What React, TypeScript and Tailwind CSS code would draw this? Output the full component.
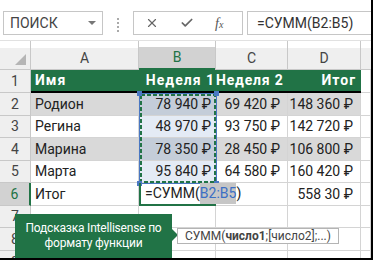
import React from 'react';
import { X, Check } from 'lucide-react';

interface DataRow {
  num: string;
  name: string;
  b: string;
  c: string;
  d: string;
  stripe: boolean;
  h: string;
}

const rows: DataRow[] = [
  { num: '2', name: 'Родион', b: '78 940 ₽', c: '69 420 ₽', d: '148 360 ₽', stripe: true, h: 'h-[23px]' },
  { num: '3', name: 'Регина', b: '48 970 ₽', c: '93 750 ₽', d: '142 720 ₽', stripe: false, h: 'h-[22px]' },
  { num: '4', name: 'Марина', b: '78 350 ₽', c: '28 450 ₽', d: '106 800 ₽', stripe: true, h: 'h-[23px]' },
  { num: '5', name: 'Марта', b: '95 840 ₽', c: '64 580 ₽', d: '160 420 ₽', stripe: false, h: 'h-[22px]' },
];

const grid = 'border-r border-b border-[#d4d4d4]';
const rowHead = 'w-[31px] shrink-0 flex items-center justify-center bg-[#efefef] border-r border-b border-[#c8c8c8] text-[14px] text-[#444]';
const colHead = 'flex flex-col border-r border-[#c8c8c8]';

const EmptyRow: React.FC<{ num: string; h: string }> = ({ num, h }) => (
  <div className={`flex ${h}`}>
    <div className={rowHead}>{num}</div>
    <div className={`w-[108px] ${grid}`} />
    <div className={`w-[77px] ${grid}`} />
    <div className={`w-[72px] ${grid}`} />
    <div className={`w-[73px] ${grid}`} />
    <div className={`flex-1 ${grid}`} />
  </div>
);

export default function App() {
  return (
    <div className="relative w-[373px] h-[260px] overflow-hidden bg-white border-r-2 border-b-2 border-black font-['Roboto',sans-serif]">
      {/* Formula bar */}
      <div className="flex h-[41px] pt-[11px] border-b border-[#e1e1e1]">
        <div className="ml-[3px] w-[100px] h-[24px] border border-[#c6c6c6] flex items-center justify-between pl-[6px] pr-[6px] text-[14px] text-[#444]">
          <span>ПОИСК</span>
          <span className="w-0 h-0 border-x-[4px] border-x-transparent border-t-[4px] border-t-[#777]" />
        </div>
        <div className="ml-[14px] mt-[7px] flex flex-col gap-[2px]">
          <span className="w-[2px] h-[2px] bg-[#aaa]" />
          <span className="w-[2px] h-[2px] bg-[#aaa]" />
          <span className="w-[2px] h-[2px] bg-[#aaa]" />
          <span className="w-[2px] h-[2px] bg-[#aaa]" />
        </div>
        <div className="ml-[14px] w-[110px] h-[24px] border border-[#c6c6c6] flex items-center">
          <X className="ml-[11px] w-[14px] h-[14px] text-[#666]" strokeWidth={2} />
          <Check className="ml-[21px] w-[14px] h-[14px] text-[#666]" strokeWidth={3} />
          <span className="ml-[21px] font-['Liberation_Serif',serif] italic text-[14px] text-[#555]">
            f<span className="text-[10px]">x</span>
          </span>
        </div>
        <div className="ml-[4px] flex-1 h-[24px] border-y border-l border-[#c6c6c6] flex items-center pl-[9px] text-[14px] text-[#333]">
          =СУММ(B2:B5)
        </div>
      </div>

      {/* Column headers */}
      <div className="flex h-[29px] text-[14px] text-[#444]">
        <div className={`w-[31px] shrink-0 ${colHead}`}>
          <div className="h-[7px]" />
          <div className="flex-1 flex items-end justify-end pr-[4px] pb-[4px] bg-[#efefef] border-b border-[#c8c8c8]">
            <span className="w-0 h-0 border-l-[11px] border-l-transparent border-b-[11px] border-b-[#b5b5b5]" />
          </div>
        </div>
        <div className={`w-[108px] ${colHead}`}>
          <div className="h-[7px]" />
          <div className="flex-1 flex items-center justify-center bg-[#efefef] border-b border-[#c8c8c8]">A</div>
        </div>
        <div className={`w-[77px] ${colHead}`}>
          <div className="h-[7px]" />
          <div className="flex-1 flex items-center justify-center bg-[#d2d2d2] border-b-2 border-[#217346] text-[#217346]">B</div>
        </div>
        <div className={`w-[72px] ${colHead}`}>
          <div className="h-[7px]" />
          <div className="flex-1 flex items-center justify-center bg-[#efefef] border-b border-[#c8c8c8]">C</div>
        </div>
        <div className={`w-[73px] ${colHead}`}>
          <div className="h-[7px]" />
          <div className="flex-1 flex items-center justify-center bg-[#efefef] border-b border-[#c8c8c8]">D</div>
        </div>
        <div className="flex-1 flex flex-col">
          <div className="h-[7px]" />
          <div className="flex-1 bg-[#efefef] border-b border-[#c8c8c8]" />
        </div>
      </div>

      {/* Row 1: header */}
      <div className="flex h-[23px]">
        <div className={rowHead}>1</div>
        <div className="w-[330px] flex bg-[#217346] border-b-2 border-black text-white text-[14px] font-bold tracking-[1px]">
          <div className="w-[108px] flex items-center pl-[4px]">Имя</div>
          <div className="w-[77px] flex items-center justify-end pr-[1px]">Неделя 1</div>
          <div className="w-[72px] flex items-center whitespace-nowrap tracking-[0.8px]">Неделя 2</div>
          <div className="w-[73px] flex items-center justify-end pr-[5px]">Итог</div>
        </div>
        <div className={`flex-1 ${grid}`} />
      </div>

      {/* Rows 2-5 */}
      {rows.map((r) => (
        <div key={r.num} className={`flex ${r.h} text-[14px] text-[#222]`}>
          <div className={rowHead}>{r.num}</div>
          <div className={`w-[108px] flex items-center pl-[4px] ${grid} ${r.stripe ? 'bg-[#d9d9d9]' : 'bg-white'}`}>{r.name}</div>
          <div className={`w-[77px] flex items-center justify-end pr-[4px] ${grid} ${r.stripe ? 'bg-[#c4cdd9]' : 'bg-[#e4ebf5]'}`}>{r.b}</div>
          <div className={`w-[72px] flex items-center justify-end pr-[7px] ${grid} ${r.stripe ? 'bg-[#d9d9d9]' : 'bg-white'}`}>{r.c}</div>
          <div className={`w-[73px] flex items-center justify-end pr-[7px] ${grid} ${r.stripe ? 'bg-[#d9d9d9]' : 'bg-white'}`}>{r.d}</div>
          <div className={`flex-1 ${grid}`} />
        </div>
      ))}

      {/* Row 6: total */}
      <div className="flex h-[23px] text-[14px] text-[#222]">
        <div className="w-[31px] shrink-0 flex items-center justify-center bg-[#d2d2d2] border-r-2 border-b border-[#c8c8c8] border-r-[#217346] text-[14px] text-[#217346]">6</div>
        <div className={`w-[108px] flex items-center pl-[4px] ${grid}`}>Итог</div>
        <div className="w-[77px] flex items-center pl-[4px] border-l-2 border-b-2 border-[#217346] whitespace-nowrap overflow-visible z-10">
          <span>=СУММ(</span>
          <span className="bg-[#c6c6c6] text-[#3b6fc4]">B2:B5</span>
          <span>)</span>
          <span className="w-[1px] h-[16px] bg-black" />
        </div>
        <div className={`w-[72px] ${grid}`} />
        <div className={`w-[73px] flex items-center justify-end pr-[7px] ${grid}`}>558 30 ₽</div>
        <div className={`flex-1 ${grid}`} />
      </div>

      <EmptyRow num="7" h="h-[22px]" />
      <EmptyRow num="8" h="h-[23px]" />
      <EmptyRow num="9" h="h-[23px]" />

      {/* Range reference B2:B5 */}
      <div className="absolute left-[139px] top-[93px] w-[78px] h-[91px] border border-[#4a78c2] pointer-events-none" />
      <svg className="absolute left-[139px] top-[93px] pointer-events-none" width="78" height="91">
        <rect x="2" y="2" width="74" height="87" fill="none" stroke="#217346" strokeWidth="2" strokeDasharray="4 2" />
      </svg>
      <span className="absolute left-[137px] top-[91px] w-[5px] h-[5px] bg-[#4a78c2]" />
      <span className="absolute left-[214px] top-[91px] w-[5px] h-[5px] bg-[#4a78c2]" />
      <span className="absolute left-[137px] top-[181px] w-[5px] h-[5px] bg-[#4a78c2]" />
      <span className="absolute left-[214px] top-[181px] w-[5px] h-[5px] bg-[#4a78c2]" />

      {/* Callout */}
      <div className="absolute left-[15px] top-[214px] w-[157px] h-[44px] bg-[#217346] text-white text-[12px] tracking-[-0.2px] leading-[15px] text-center pt-[7px]">
        Подсказка Intellisense по
        <br />
        формату функции
      </div>
      <span className="absolute left-[172px] top-[229px] w-0 h-0 border-y-[6px] border-y-transparent border-l-[6px] border-l-[#217346]" />

      {/* Function tooltip */}
      <div className="absolute left-[177px] top-[228px] w-[162px] h-[16px] flex items-center pl-[7px] border border-[#b4b4b4] bg-white text-[12px] text-[#444] whitespace-nowrap">
        СУММ(<b>число1</b>;[число2];...)
      </div>
    </div>
  );
}
